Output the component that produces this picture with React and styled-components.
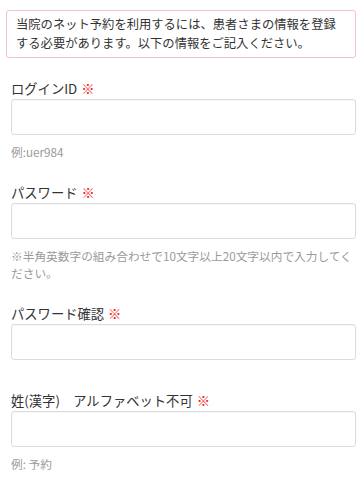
import React from 'react'
import styled, { createGlobalStyle } from 'styled-components'

const GlobalStyle = createGlobalStyle`
  html, body {
    margin: 0;
    padding: 0;
    background: #fff;
  }
  body {
    font-family: "Noto Sans CJK JP", "Noto Sans", sans-serif;
    color: #333;
  }
`

const Page = styled.div`
  padding: 10px 6px 20px 6px;
`

const Notice = styled.div`
  border: 1px solid #f4bfd0;
  border-radius: 3px;
  padding: 4px 9px;
  font-size: 12.3px;
  line-height: 19px;
  color: #333;
`

const Form = styled.form`
  padding: 21px 0 0 5px;
`

const Field = styled.div`
  margin-bottom: ${(p) => (p.hasHint ? 23 : 31)}px;
`

const Label = styled.label`
  display: block;
  font-size: 13.3px;
  line-height: 20px;
  color: #333;
`

const Mark = styled.span`
  color: #f21c1c;
  margin-left: 4px;
`

const Input = styled.input`
  display: block;
  box-sizing: border-box;
  width: 100%;
  height: 36px;
  margin: 0;
  padding: 0 8px;
  border: 1px solid #dcdcdc;
  border-radius: 3px;
  box-shadow: inset 0 1px 1px rgba(0, 0, 0, 0.03);
  background: #fff;
  font-family: inherit;
  font-size: 13px;
  outline: none;
`

const Hint = styled.p`
  margin: 8px 0 0;
  font-size: 11.7px;
  line-height: 17px;
  color: #9a9a9a;
`

const fields = [
  { id: 'loginId', label: 'ログインID', hint: '例:uer984' },
  { id: 'password', label: 'パスワード', type: 'password', hint: '※半角英数字の組み合わせで10文字以上20文字以内で入力してください。' },
  { id: 'passwordConfirm', label: 'パスワード確認', type: 'password' },
  { id: 'lastName', label: '姓(漢字)　アルファベット不可', hint: '例: 予約' },
]

export default function App() {
  return (
    <>
      <GlobalStyle />
      <Page>
        <Notice>
          当院のネット予約を利用するには、患者さまの情報を登録する必要があります。以下の情報をご記入ください。
        </Notice>
        <Form onSubmit={(e) => e.preventDefault()}>
          {fields.map((f) => (
            <Field key={f.id} hasHint={!!f.hint}>
              <Label htmlFor={f.id}>
                {f.label}
                <Mark>※</Mark>
              </Label>
              <Input id={f.id} type={f.type || 'text'} />
              {f.hint && <Hint>{f.hint}</Hint>}
            </Field>
          ))}
        </Form>
      </Page>
    </>
  )
}
